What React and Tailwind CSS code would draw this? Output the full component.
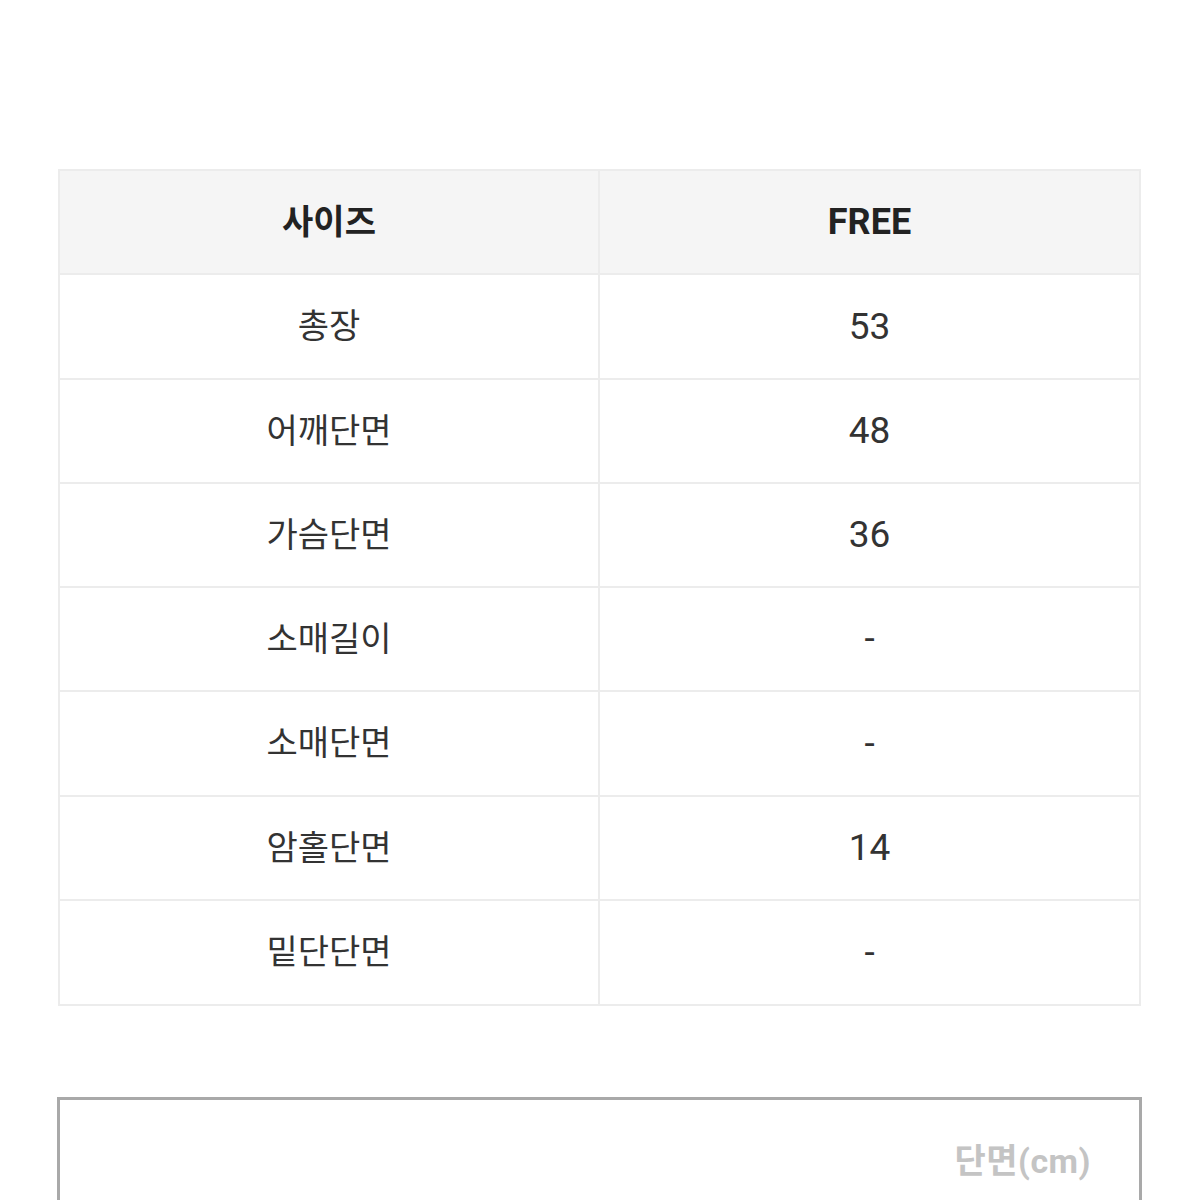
import React from 'react';

// ─── Data ───────────────────────────────────────────────────────────────────

const ROWS = [
  { label: '총장', value: '53', h: 'h-[105px]' },
  { label: '어깨단면', value: '48', h: 'h-[104px]' },
  { label: '가슴단면', value: '36', h: 'h-[104px]' },
  { label: '소매길이', value: '-', h: 'h-[104px]' },
  { label: '소매단면', value: '-', h: 'h-[105px]' },
  { label: '암홀단면', value: '14', h: 'h-[104px]' },
  { label: '밑단단면', value: '-', h: 'h-[105px]' },
];

const FONT = "font-['Roboto','Noto_Sans_CJK_KR',sans-serif]";

// ─── Size table ─────────────────────────────────────────────────────────────

const SizeTable = () => (
  <div className="border-2 border-[#ececec] bg-white">
    <div className="grid grid-cols-[540px_1fr] h-[102px] bg-[#f5f5f5]">
      <div className="flex items-center justify-center border-r-2 border-[#ececec] text-[34px] font-bold text-[#222]">
        사이즈
      </div>
      <div className="flex items-center justify-center text-[36px] font-bold text-[#222]">FREE</div>
    </div>
    {ROWS.map((row) => (
      <div key={row.label} className={`grid grid-cols-[540px_1fr] border-t-2 border-[#ececec] ${row.h}`}>
        <div className="flex items-center justify-center border-r-2 border-[#ececec] text-[34px] text-[#333]">
          {row.label}
        </div>
        <div className="flex items-center justify-center text-[37px] text-[#333]">{row.value}</div>
      </div>
    ))}
  </div>
);

export default function App() {
  return (
    <div className={`w-[1200px] h-[1200px] overflow-hidden bg-white ${FONT}`}>
      <div className="pt-[169px] pl-[58px] w-[1141px]">
        <SizeTable />
      </div>
      <div className="mt-[91px] ml-[57px] w-[1085px] h-[200px] border-[3px] border-[#a9a9a9] flex justify-end">
        <span className="mt-[36px] mr-[48px] text-[34px] font-bold tracking-[0.5px] text-[#c4c4c4]">단면(cm)</span>
      </div>
    </div>
  );
}
